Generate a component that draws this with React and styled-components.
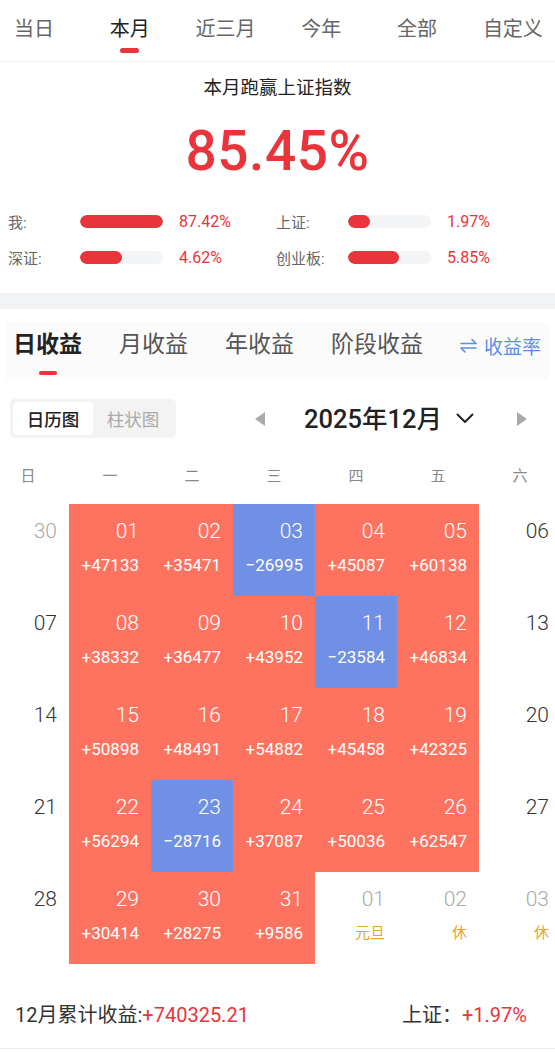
import React from "react";
import styled, { createGlobalStyle } from "styled-components";

const GlobalStyle = createGlobalStyle`
body {
  margin: 0;
  background: #ffffff;
  overflow-x: hidden;
  font-family: Roboto, "Noto Sans CJK SC", sans-serif;
  color: #222;
}
`

const RED = "#e8343a";
const CELL_RED = "#fe735f";
const CELL_BLUE = "#6f90e5";

const Page = styled.div`
width: 555px;
overflow: hidden;
background: #fff;
`

const TopTabs = styled.div`
display: flex;
margin-left: -14px;
width: 575px;
border-bottom: 1px solid #f0f0f0;
`

const TopTab = styled.div`
width: 95.8px;
display: flex;
flex-direction: column;
align-items: center;
padding-top: 17px;
padding-bottom: 8px;
font-size: 20px;
line-height: 24px;
color: ${(p) => (p.active ? "#222" : "#666")};
&::after {
  content: "";
  display: block;
  margin-top: 7px;
  width: 19px;
  height: 5px;
  border-radius: 3px;
  background: ${(p) => (p.active ? RED : "transparent")};
}
`

const Summary = styled.div`
padding: 16px 0 25px;
display: flex;
flex-direction: column;
align-items: center;
`

const Title = styled.div`
font-size: 18.5px;
line-height: 20px;
color: #222;
`

const BigNumber = styled.div`
margin-top: 23px;
font-size: 55px;
line-height: 60px;
font-weight: 500;
color: ${RED};
letter-spacing: 0.5px;
`

const StatGrid = styled.div`
align-self: stretch;
margin-top: 29px;
padding-left: 8px;
display: grid;
grid-template-columns: 268px 268px;
row-gap: 14px;
`

const Stat = styled.div`
display: grid;
grid-template-columns: 56px 83px auto;
column-gap: 16px;
align-items: center;
height: 22px;
`

const StatLabel = styled.span`
font-size: 15px;
color: #666;
`

const Track = styled.div`
height: 13px;
border-radius: 7px;
background: #f3f4f5;
overflow: hidden;
`

const Fill = styled.div`
height: 100%;
border-radius: 7px;
background: ${RED};
`

const StatValue = styled.span`
font-size: 16px;
color: ${RED};
`

const Divider = styled.div`
height: 16px;
background: #f2f3f5;
`

const IncomeTabs = styled.div`
margin: 13px 6px 0;
padding: 8px 9px 5px 7px;
background: #fbfbfb;
display: flex;
align-items: flex-start;
gap: 37px;
white-space: nowrap;
`

const IncomeTab = styled.div`
flex-shrink: 0;
display: flex;
flex-direction: column;
align-items: center;
font-size: 23px;
line-height: 30px;
font-weight: ${(p) => (p.active ? 700 : 400)};
color: ${(p) => (p.active ? "#222" : "#555")};
&::after {
  content: "";
  display: block;
  margin-top: 11px;
  width: 18px;
  height: 4px;
  border-radius: 2px;
  background: ${(p) => (p.active ? RED : "transparent")};
}
`

const RateSwitch = styled.div`
flex-shrink: 0;
margin-left: auto;
display: flex;
align-items: center;
gap: 7px;
height: 30px;
font-size: 19px;
color: #5b8def;
`

const Controls = styled.div`
margin-top: 19px;
padding-left: 10px;
display: flex;
align-items: center;
`

const Segmented = styled.div`
display: flex;
padding: 3px;
background: #f3f3f3;
border-radius: 5px;
`

const Segment = styled.div`
width: 80px;
height: 33px;
display: flex;
align-items: center;
justify-content: center;
border-radius: 4px;
font-size: 17.5px;
font-weight: ${(p) => (p.active ? 500 : 400)};
background: ${(p) => (p.active ? "#fff" : "transparent")};
color: ${(p) => (p.active ? "#222" : "#aaa")};
`

const MonthNav = styled.div`
display: flex;
align-items: center;
margin-left: 79px;
`

const Arrow = styled.span`
width: 0;
height: 0;
border-top: 7px solid transparent;
border-bottom: 7px solid transparent;
${(p) => (p.dir === "left" ? "border-right: 10px solid #aaa;" : "border-left: 10px solid #aaa;")}
`

const MonthTitle = styled.div`
margin-left: 39px;
font-size: 25.5px;
line-height: 30px;
font-weight: 500;
color: #222;
`

const Chevron = styled.svg`
margin-left: 14px;
margin-right: 43px;
`

const Weekdays = styled.div`
margin: 28px 0 0 -13px;
width: 574px;
display: grid;
grid-template-columns: repeat(7, 82px);
`

const Weekday = styled.div`
text-align: center;
font-size: 15px;
line-height: 20px;
color: #888;
`

const Calendar = styled.div`
margin: 18px 0 0 -13px;
width: 574px;
display: grid;
grid-template-columns: repeat(7, 82px);
grid-auto-rows: 92px;
`

const Cell = styled.div`
padding: 14px 12px 0 0;
display: flex;
flex-direction: column;
align-items: flex-end;
background: ${(p) => (p.tone === "up" ? CELL_RED : p.tone === "down" ? CELL_BLUE : "transparent")};
`

const DayNum = styled.div`
font-size: 21px;
line-height: 26px;
font-weight: 300;
color: ${(p) => (p.tone ? "#fff" : p.muted ? "#aaa" : "#333")};
`

const DayValue = styled.div`
margin-top: 11px;
font-size: 17px;
line-height: 20px;
font-weight: 400;
color: #fff;
`

const Holiday = styled.div`
margin-top: 11px;
font-size: 15px;
line-height: 20px;
color: #f0a030;
`

const Footer = styled.div`
padding: 39px 28px 21px 15px;
display: flex;
justify-content: space-between;
align-items: center;
font-size: 20px;
line-height: 24px;
color: #333;
border-bottom: 1px solid #eee;
`

const RedText = styled.span`
color: ${RED};
`

const stats = [
  { label: "我:", pct: 100, value: "87.42%" },
  { label: "上证:", pct: 26, value: "1.97%" },
  { label: "深证:", pct: 50, value: "4.62%" },
  { label: "创业板:", pct: 61, value: "5.85%" },
];

const days = [
  { d: "30", muted: true },
  { d: "01", v: "+47133" },
  { d: "02", v: "+35471" },
  { d: "03", v: "\u221226995" },
  { d: "04", v: "+45087" },
  { d: "05", v: "+60138" },
  { d: "06" },
  { d: "07" },
  { d: "08", v: "+38332" },
  { d: "09", v: "+36477" },
  { d: "10", v: "+43952" },
  { d: "11", v: "\u221223584" },
  { d: "12", v: "+46834" },
  { d: "13" },
  { d: "14" },
  { d: "15", v: "+50898" },
  { d: "16", v: "+48491" },
  { d: "17", v: "+54882" },
  { d: "18", v: "+45458" },
  { d: "19", v: "+42325" },
  { d: "20" },
  { d: "21" },
  { d: "22", v: "+56294" },
  { d: "23", v: "\u221228716" },
  { d: "24", v: "+37087" },
  { d: "25", v: "+50036" },
  { d: "26", v: "+62547" },
  { d: "27" },
  { d: "28" },
  { d: "29", v: "+30414" },
  { d: "30", v: "+28275" },
  { d: "31", v: "+9586" },
  { d: "01", muted: true, h: "元旦" },
  { d: "02", muted: true, h: "休" },
  { d: "03", muted: true, h: "休" },
];

export default function App() {
  return (
    <Page>
      <GlobalStyle />
      <TopTabs>
        {["当日", "本月", "近三月", "今年", "全部", "自定义"].map((t) => (
          <TopTab key={t} active={t === "本月"}>{t}</TopTab>
        ))}
      </TopTabs>

      <Summary>
        <Title>本月跑赢上证指数</Title>
        <BigNumber>85.45%</BigNumber>
        <StatGrid>
          {stats.map((s) => (
            <Stat key={s.label}>
              <StatLabel>{s.label}</StatLabel>
              <Track>
                <Fill style={{ width: s.pct + "%" }} />
              </Track>
              <StatValue>{s.value}</StatValue>
            </Stat>
          ))}
        </StatGrid>
      </Summary>

      <Divider />

      <IncomeTabs>
        {["日收益", "月收益", "年收益", "阶段收益"].map((t) => (
          <IncomeTab key={t} active={t === "日收益"}>{t}</IncomeTab>
        ))}
        <RateSwitch>
          <svg width="17" height="15" viewBox="0 0 17 15" fill="none" stroke="#5b8def" strokeWidth="1.6" strokeLinecap="round" strokeLinejoin="round">
            <path d="M1 5.5H16L12 1.5" />
            <path d="M16 10H1L5 14" />
          </svg>
          收益率
        </RateSwitch>
      </IncomeTabs>

      <Controls>
        <Segmented>
          <Segment active>日历图</Segment>
          <Segment>柱状图</Segment>
        </Segmented>
        <MonthNav>
          <Arrow dir="left" />
          <MonthTitle>2025年12月</MonthTitle>
          <Chevron width="18" height="11" viewBox="0 0 18 11" fill="none" stroke="#222" strokeWidth="2" strokeLinecap="round" strokeLinejoin="round">
            <path d="M1.5 1.5L9 9L16.5 1.5" />
          </Chevron>
          <Arrow dir="right" />
        </MonthNav>
      </Controls>

      <Weekdays>
        {["日", "一", "二", "三", "四", "五", "六"].map((w) => (
          <Weekday key={w}>{w}</Weekday>
        ))}
      </Weekdays>

      <Calendar>
        {days.map((c, i) => {
          const tone = c.v ? (c.v.startsWith("+") ? "up" : "down") : null;
          return (
            <Cell key={i} tone={tone}>
              <DayNum tone={tone} muted={c.muted}>{c.d}</DayNum>
              {c.v && <DayValue>{c.v}</DayValue>}
              {c.h && <Holiday>{c.h}</Holiday>}
            </Cell>
          );
        })}
      </Calendar>

      <Footer>
        <span>
          12月累计收益:<RedText>+740325.21</RedText>
        </span>
        <span>
          上证：<RedText>+1.97%</RedText>
        </span>
      </Footer>
    </Page>
  );
}
